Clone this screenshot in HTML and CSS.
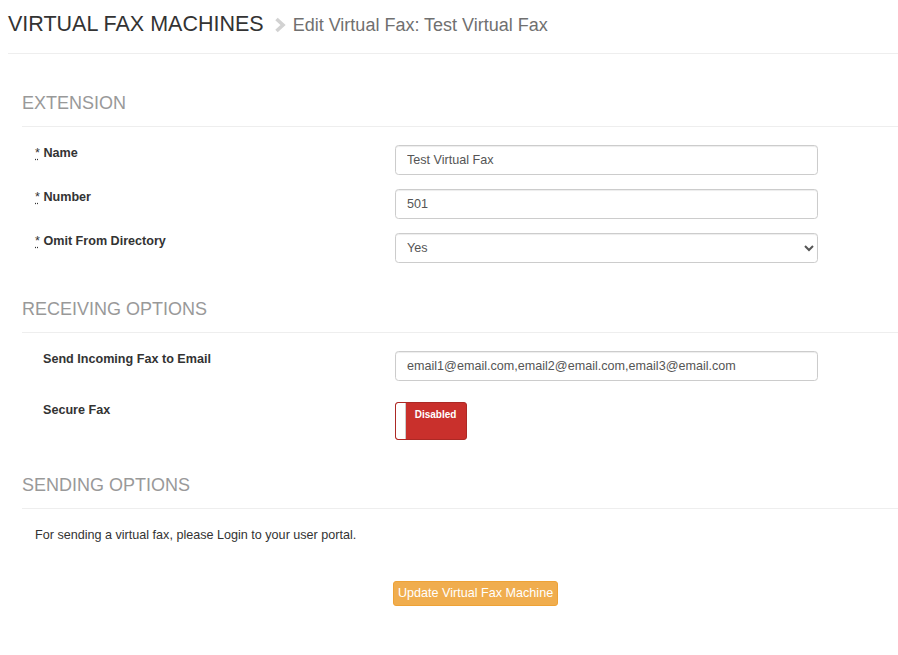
FILE: index.html
```html
<!DOCTYPE html>
<html lang="en">
<head>
<meta charset="utf-8">
<title>Edit Virtual Fax</title>
<link rel="stylesheet" href="styles.css">
</head>
<body>
<div class="page">
  <header class="title-bar">
    <h1 class="title">VIRTUAL FAX MACHINES</h1>
    <svg class="crumb-sep" width="12" height="16" viewBox="0 0 12 16" aria-hidden="true">
      <polyline points="2.5,2 9,8 2.5,14" fill="none" stroke="#d2d2d2" stroke-width="3.6" stroke-linejoin="miter"/>
    </svg>
    <span class="subtitle">Edit Virtual Fax: Test Virtual Fax</span>
  </header>

  <form class="form">
    <section class="section section-first">
      <h2 class="section-title">EXTENSION</h2>
      <div class="rows">
        <div class="row">
          <label class="label"><abbr class="req" title="required">*</abbr> Name</label>
          <div class="control"><input class="input" type="text" value="Test Virtual Fax"></div>
        </div>
        <div class="row">
          <label class="label"><abbr class="req" title="required">*</abbr> Number</label>
          <div class="control"><input class="input" type="text" value="501"></div>
        </div>
        <div class="row">
          <label class="label"><abbr class="req" title="required">*</abbr> Omit From Directory</label>
          <div class="control">
            <select class="input select">
              <option selected>Yes</option>
              <option>No</option>
            </select>
          </div>
        </div>
      </div>
    </section>

    <section class="section">
      <h2 class="section-title">RECEIVING OPTIONS</h2>
      <div class="rows">
        <div class="row">
          <label class="label label-plain">Send Incoming Fax to Email</label>
          <div class="control"><input class="input" type="text" value="email1@email.com,email2@email.com,email3@email.com"></div>
        </div>
        <div class="row row-toggle">
          <label class="label label-plain">Secure Fax</label>
          <div class="control">
            <div class="toggle">
              <span class="toggle-knob"></span>
              <span class="toggle-text">Disabled</span>
            </div>
          </div>
        </div>
      </div>
    </section>

    <section class="section section-last">
      <h2 class="section-title">SENDING OPTIONS</h2>
      <p class="note">For sending a virtual fax, please Login to your user portal.</p>
      <div class="actions">
        <button type="button" class="btn">Update Virtual Fax Machine</button>
      </div>
    </section>
  </form>
</div>
</body>
</html>
```

FILE: styles.css
```css
* {
  box-sizing: border-box;
}

html, body {
  margin: 0;
  padding: 0;
  background: #ffffff;
}

body {
  font-family: "Liberation Sans", Arial, sans-serif;
  font-size: 12.6px;
  line-height: 18px;
  color: #333333;
}

.page {
  width: 898px;
}

.title-bar {
  display: flex;
  align-items: baseline;
  margin-left: 8px;
  padding-top: 12px;
  height: 54px;
  border-bottom: 1px solid #eeeeee;
}

.title {
  margin: 0;
  font-size: 21.5px;
  line-height: 24px;
  font-weight: normal;
  color: #333333;
}

.crumb-sep {
  margin-left: 10px;
  margin-right: 7px;
  align-self: flex-start;
  margin-top: 5px;
}

.subtitle {
  font-size: 18px;
  color: #707070;
}

.form {
  margin: 0;
}

.section {
  margin-left: 22px;
  margin-top: 36px;
}

.section-first {
  margin-top: 39px;
}

.section-last {
  margin-top: 35px;
}

.section-title {
  margin: 0;
  font-size: 18px;
  line-height: 20px;
  font-weight: normal;
  color: #999999;
  padding-bottom: 13px;
  border-bottom: 1px solid #eeeeee;
}

.rows {
  display: flex;
  flex-direction: column;
  gap: 13px;
  padding-top: 17px;
  padding-left: 13px;
}

.row {
  display: grid;
  grid-template-columns: 360px 423px;
  align-items: start;
}

.row-toggle {
  margin-top: 7px;
}

.label {
  font-weight: bold;
  color: #333333;
}

.label-plain {
  padding-left: 8px;
}

.req {
  font-weight: normal;
  text-decoration: underline dotted;
  text-underline-offset: 2px;
  cursor: help;
}

.control {
  padding-top: 1px;
}

.input {
  display: block;
  width: 423px;
  height: 30px;
  margin: 0;
  padding: 0 11px;
  font-family: "Liberation Sans", Arial, sans-serif;
  font-size: 12.6px;
  color: #555555;
  background: #ffffff;
  border: 1px solid #cccccc;
  border-radius: 3.6px;
  box-shadow: inset 0 1px 1px rgba(0, 0, 0, 0.075);
  outline: none;
}

.select {
  padding-left: 7px;
  padding-right: 6px;
}

.toggle {
  position: relative;
  display: flex;
  width: 72px;
  height: 38px;
  background: #c9302c;
  border: 1px solid #ac2925;
  border-radius: 3px;
  overflow: hidden;
}

.toggle-knob {
  width: 10px;
  height: 100%;
  background: #ffffff;
  border-right: 1px solid #cccccc;
  border-radius: 2px 0 0 2px;
}

.toggle-text {
  flex: 1;
  text-align: center;
  padding-top: 6px;
  padding-right: 1px;
  font-size: 10px;
  line-height: 12px;
  font-weight: bold;
  color: #ffffff;
}

.note {
  margin: 17px 0 0 0;
  padding-left: 13px;
  color: #333333;
}

.actions {
  margin-top: 37px;
  padding-left: 371px;
}

.btn {
  display: block;
  height: 25px;
  padding: 0 4px;
  font-family: "Liberation Sans", Arial, sans-serif;
  font-size: 12.6px;
  line-height: 23px;
  color: #ffffff;
  background: #f0ad4e;
  border: 1px solid #eea236;
  border-radius: 3px;
  cursor: pointer;
}
```
